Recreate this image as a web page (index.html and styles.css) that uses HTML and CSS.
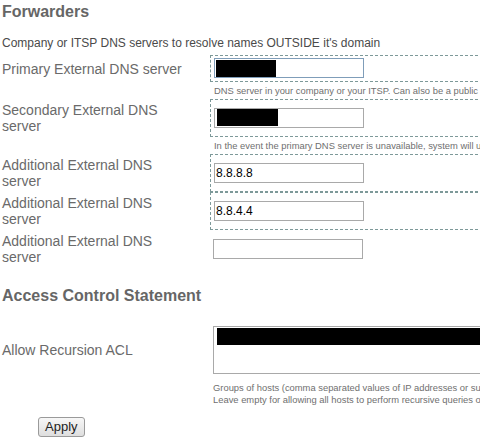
FILE: index.html
```html
<!DOCTYPE html>
<html>
<head>
<meta charset="utf-8">
<title>DNS Forwarders</title>
<link rel="stylesheet" href="styles.css">
</head>
<body>
<div class="page">
  <h2 class="section-title">Forwarders</h2>
  <p class="section-desc">Company or ITSP DNS servers to resolve names OUTSIDE it's domain</p>

  <div class="row">
    <div class="label">Primary External DNS server</div>
    <div class="field dashed">
      <div class="input-wrap">
        <input class="text focus" type="text" value="">
        <span class="redact redact-1"></span>
      </div>
    </div>
  </div>
  <div class="help-row">DNS server in your company or your ITSP. Can also be a public DNS server such as Google's.</div>

  <div class="row">
    <div class="label">Secondary External DNS server</div>
    <div class="field dashed">
      <div class="input-wrap">
        <input class="text" type="text" value="">
        <span class="redact redact-2"></span>
      </div>
    </div>
  </div>
  <div class="help-row">In the event the primary DNS server is unavailable, system will use the secondary DNS server.</div>

  <div class="row">
    <div class="label">Additional External DNS server</div>
    <div class="field dashed">
      <input class="text" type="text" value="8.8.8.8">
    </div>
  </div>

  <div class="row">
    <div class="label">Additional External DNS server</div>
    <div class="field dashed">
      <input class="text" type="text" value="8.8.4.4">
    </div>
  </div>

  <div class="row">
    <div class="label">Additional External DNS server</div>
    <div class="field plain">
      <input class="text" type="text" value="">
    </div>
  </div>

  <h2 class="section-title acl-title">Access Control Statement</h2>

  <div class="row acl-row">
    <div class="label">Allow Recursion ACL</div>
    <div class="field plain">
      <div class="input-wrap">
        <textarea class="area"></textarea>
        <span class="redact redact-3"></span>
      </div>
    </div>
  </div>
  <div class="help-row acl-help">Groups of hosts (comma separated values of IP addresses or subnets) allowed to perform recursive queries.<br>Leave empty for allowing all hosts to perform recursive queries on this server.</div>

  <div class="actions">
    <button class="btn" type="button">Apply</button>
  </div>
</div>
</body>
</html>
```

FILE: styles.css
```css
html, body {
  margin: 0;
  padding: 0;
  overflow: hidden;
  background: #ffffff;
}

.page {
  width: 1000px;
  padding: 2px 0 0 2px;
  font-family: "Liberation Sans", Arial, sans-serif;
}

.section-title {
  margin: 0;
  font-size: 16px;
  line-height: 20px;
  font-weight: bold;
  color: #666666;
}

.section-desc {
  margin: 13px 0 3px 0;
  font-size: 12px;
  line-height: 17px;
  color: #4a4a4a;
}

.row {
  display: flex;
  align-items: stretch;
}

.label {
  flex: none;
  width: 190px;
  margin-right: 18px;
  padding: 3px 0 3px 0;
  font-size: 14px;
  line-height: 16px;
  color: #6a6a6a;
  display: flex;
  align-items: center;
}

.field {
  flex: none;
  width: 700px;
  display: flex;
  align-items: center;
  padding: 2px 3px 3px 3px;
}

.field.dashed {
  border: 1px dashed #7d9999;
}

.field.plain {
  padding: 3px 3px 4px 3px;
}

.input-wrap {
  position: relative;
  display: flex;
}

.text {
  box-sizing: border-box;
  width: 150px;
  height: 20px;
  margin: 0;
  padding: 1px 1px;
  border: 1px solid #a9a9a9;
  font-family: "Liberation Sans", Arial, sans-serif;
  font-size: 12px;
  color: #000000;
  background: #ffffff;
  outline: none;
}

.text.focus {
  border-color: #7f9db9;
}

.redact {
  position: absolute;
  background: #000000;
}

.redact-1 {
  left: 2px;
  top: 2px;
  width: 60px;
  height: 17px;
}

.redact-2 {
  left: 3px;
  top: 1px;
  width: 61px;
  height: 17px;
}

.redact-3 {
  left: 4px;
  top: 2px;
  width: 420px;
  height: 17px;
}

.help-row {
  margin-left: 212px;
  padding: 2px 0 1px 0;
  font-size: 9.4px;
  line-height: 14px;
  color: #6f6f6f;
  white-space: nowrap;
}

.acl-title {
  margin-top: 18px;
}

.acl-row {
  margin-top: 17px;
}

.acl-row .field.plain {
  padding: 3px 3px 3px 3px;
}

.area {
  box-sizing: border-box;
  width: 420px;
  height: 48px;
  margin: 0;
  padding: 1px;
  border: 1px solid #a9a9a9;
  resize: none;
  display: block;
  background: #ffffff;
}

.acl-help {
  margin-left: 211px;
  padding-top: 5px;
  line-height: 11.5px;
}

.actions {
  padding: 11px 0 0 36px;
}

.btn {
  box-sizing: border-box;
  height: 20px;
  padding: 0 6px;
  margin: 0;
  border: 1px solid #9a9a9a;
  border-radius: 3px;
  background: linear-gradient(#f7f7f7, #dedede);
  font-family: "Liberation Sans", Arial, sans-serif;
  font-size: 13px;
  line-height: 16px;
  color: #222222;
}
```
